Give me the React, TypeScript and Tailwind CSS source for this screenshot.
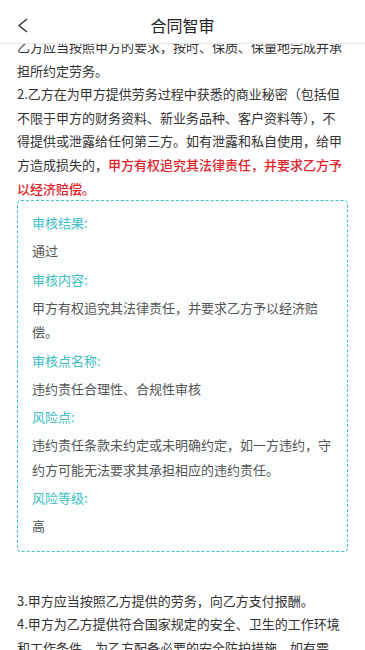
import React from "react";

const font = { fontFamily: '"Noto Sans CJK SC", "Noto Sans", sans-serif' };

function Item({ label, value }: { label: string; value: string }) {
  return (
    <div>
      <div className="text-[13px] leading-[28px] text-[#3fbfc3]">{label}</div>
      <div className="my-[2px] text-[13px] leading-[24.5px] text-[#555555]">{value}</div>
    </div>
  );
}

export default function App() {
  return (
    <div className="relative h-[650px] w-full overflow-hidden bg-white" style={font}>
      <div className="absolute left-0 right-0 top-0 z-10 flex h-[44px] justify-center border-b border-[#e6e6e6] bg-white pt-[13px]">
        <svg className="absolute left-[16px] top-[16px]" width="14" height="20" viewBox="0 0 14 20">
          <polyline points="11,3 3,9.5 11,16" fill="none" stroke="#333" strokeWidth="1.4" />
        </svg>
        <span className="text-[16px] leading-[24px] text-[#222222]">合同智审</span>
      </div>

      <div className="px-[17px] pt-[35px] text-[13px] leading-[23.6px] text-[#333333]">
        <p>乙方应当按照甲方的要求，按时、保质、保量地完成并承担所约定劳务。</p>
        <p>
          2.乙方在为甲方提供劳务过程中获悉的商业秘密（包括但不限于甲方的财务资料、新业务品种、客户资料等），不得提供或泄露给任何第三方。如有泄露和私自使用，给甲方造成损失的，
          <span className="font-medium text-[#e0232b]">甲方有权追究其法律责任，并要求乙方予以经济赔偿。</span>
        </p>

        <div className="rounded-[4px] border border-dashed border-[#45c3c3] bg-[#fcfefe] px-[14px] pb-[10px] pt-[8px]">
          <Item label="审核结果:" value="通过" />
          <Item label="审核内容:" value="甲方有权追究其法律责任，并要求乙方予以经济赔偿。" />
          <Item label="审核点名称:" value="违约责任合理性、合规性审核" />
          <Item label="风险点:" value="违约责任条款未约定或未明确约定，如一方违约，守约方可能无法要求其承担相应的违约责任。" />
          <Item label="风险等级:" value="高" />
        </div>

        <p className="mt-[37px]">3.甲方应当按照乙方提供的劳务，向乙方支付报酬。</p>
        <p>
          4.甲方为乙方提供符合国家规定的安全、卫生的工作环境和工作条件，为乙方配备必要的安全防护措施。如有需要，甲方应当为乙方提供必要的劳动保护用品。
        </p>
      </div>
    </div>
  );
}
